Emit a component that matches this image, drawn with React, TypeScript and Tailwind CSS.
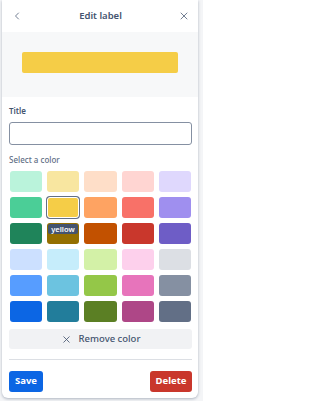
import React from "react";
import { ChevronLeft, X } from "lucide-react";

const colors: { hex: string; name: string }[][] = [
  [
    { hex: "#baf3db", name: "subtle green" },
    { hex: "#f8e6a0", name: "subtle yellow" },
    { hex: "#fedec8", name: "subtle orange" },
    { hex: "#ffd5d2", name: "subtle red" },
    { hex: "#dfd8fd", name: "subtle purple" },
  ],
  [
    { hex: "#4bce97", name: "green" },
    { hex: "#f5cd47", name: "yellow" },
    { hex: "#fea362", name: "orange" },
    { hex: "#f87168", name: "red" },
    { hex: "#9f8fef", name: "purple" },
  ],
  [
    { hex: "#1f845a", name: "bold green" },
    { hex: "#946f00", name: "bold yellow" },
    { hex: "#c25100", name: "bold orange" },
    { hex: "#c9372c", name: "bold red" },
    { hex: "#6e5dc6", name: "bold purple" },
  ],
  [
    { hex: "#cce0ff", name: "subtle blue" },
    { hex: "#c6edfb", name: "subtle sky" },
    { hex: "#d3f1a7", name: "subtle lime" },
    { hex: "#fdd0ec", name: "subtle pink" },
    { hex: "#dcdfe4", name: "subtle black" },
  ],
  [
    { hex: "#579dff", name: "blue" },
    { hex: "#6cc3e0", name: "sky" },
    { hex: "#94c748", name: "lime" },
    { hex: "#e774bb", name: "pink" },
    { hex: "#8590a2", name: "black" },
  ],
  [
    { hex: "#0c66e4", name: "bold blue" },
    { hex: "#227d9b", name: "bold sky" },
    { hex: "#5b7f24", name: "bold lime" },
    { hex: "#ae4787", name: "bold pink" },
    { hex: "#626f86", name: "bold black" },
  ],
];

const App: React.FC = () => {
  const selected = "yellow";
  const hovered = "bold yellow";

  return (
    <div
      className="min-h-[401px] w-[203px] bg-[#f4f5f7]"
      style={{ fontFamily: '"Noto Sans", "Liberation Sans", sans-serif' }}
    >
      <div className="ml-[2px] w-[196px] rounded-b-[6px] bg-white pb-[6px] shadow-[0_1px_3px_rgba(9,30,66,0.3)]">
        {/* header */}
        <div className="flex h-[32px] items-center justify-between pl-[9px] pr-[8px] text-[#44546f]">
          <button className="flex h-[12px] w-[12px] items-center justify-center" aria-label="Back">
            <ChevronLeft size={12} strokeWidth={1.5} />
          </button>
          <span className="text-[9.5px] font-semibold text-[#44546f]">Edit label</span>
          <button className="flex h-[12px] w-[12px] items-center justify-center" aria-label="Close">
            <X size={12} strokeWidth={1.5} />
          </button>
        </div>

        {/* preview */}
        <div className="flex h-[65px] items-center bg-[#f7f8f9] px-[20px] pb-[4px]">
          <div className="h-[21px] w-full rounded-[2px] bg-[#f5cd47]" />
        </div>

        <div className="pl-[7px] pr-[6px]">
          <div className="mt-[9px] text-[8px] font-semibold leading-[10px] text-[#44546f]">Title</div>
          <input
            className="mt-[6px] h-[23px] w-full rounded-[3px] border-[1.5px] border-[#8590a2] bg-white px-[4px] text-[9px] outline-none"
            defaultValue=""
          />

          <div className="mt-[10px] text-[8px] font-medium leading-[10px] text-[#626f86]">Select a color</div>

          <div className="mt-[6px] grid grid-cols-5 gap-x-[5px] gap-y-[5px] px-[1px]">
            {colors.flat().map((c) => (
              <div
                key={c.name}
                className={`relative h-[21px] rounded-[3px] ${
                  c.name === selected
                    ? "border border-white ring-1 ring-[#626f86]"
                    : ""
                }`}
                style={{ backgroundColor: c.hex }}
              >
                {c.name === hovered && (
                  <span className="absolute left-[1px] top-[1px] rounded-[2px] bg-[#44546f] px-[3px] text-[7.5px] font-semibold leading-[10px] text-white">
                    yellow
                  </span>
                )}
              </div>
            ))}
          </div>

          <button className="mt-[7px] flex h-[20px] w-full items-center justify-center gap-[7px] rounded-[3px] bg-[#f1f2f4] text-[9.5px] font-medium text-[#44546f]">
            <X size={11} strokeWidth={1.8} />
            Remove color
          </button>

          <div className="mt-[10px] h-[1px] w-full bg-[#dcdfe4]" />

          <div className="mt-[11px] flex items-center justify-between">
            <button className="h-[21px] w-[34px] rounded-[3px] bg-[#0c66e4] text-[9.5px] font-bold text-white">
              Save
            </button>
            <button className="h-[21px] w-[42px] rounded-[3px] bg-[#c9372c] text-[9.5px] font-bold text-white">
              Delete
            </button>
          </div>
        </div>
      </div>
    </div>
  );
};

export default App;
